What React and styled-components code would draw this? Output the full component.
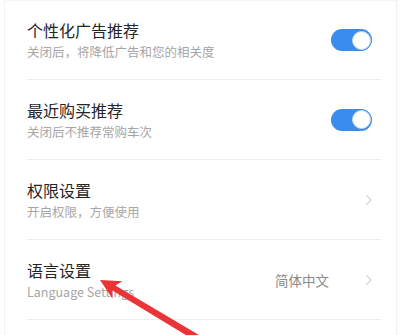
import styled, { createGlobalStyle } from "styled-components";

const GlobalStyle = createGlobalStyle`
  body {
    margin: 0;
    background: #ffffff;
    font-family: "Noto Sans CJK SC", "Noto Sans", sans-serif;
  }
`;

const items = [
  { title: "个性化广告推荐", sub: "关闭后，将降低广告和您的相关度", type: "toggle" },
  { title: "最近购买推荐", sub: "关闭后不推荐常购车次", type: "toggle" },
  { title: "权限设置", sub: "开启权限，方便使用", type: "link" },
  { title: "语言设置", sub: "Language Settings", type: "link", value: "简体中文" },
];

export default function App() {
  return (
    <Page>
      <GlobalStyle />
      <Card>
        {items.map((item) => (
          <Row key={item.title}>
            <TextBlock>
              <Title>{item.title}</Title>
              <Sub>{item.sub}</Sub>
            </TextBlock>
            {item.type === "toggle" ? (
              <Toggle>
                <Knob />
              </Toggle>
            ) : (
              <LinkSide>
                {item.value && <Value>{item.value}</Value>}
                <Chevron width="8" height="12" viewBox="0 0 8 12">
                  <path d="M1.5 1.5 L6 6 L1.5 10.5" fill="none" stroke="#d2d2d2" strokeWidth="1.2" />
                </Chevron>
              </LinkSide>
            )}
          </Row>
        ))}
      </Card>
      <Arrow width="400" height="335" viewBox="0 0 400 335">
        <polygon
          points="100,280 122.3,281.2 115.4,285.4 210.7,342 207.3,348 112.4,290.6 112.4,298.6"
          fill="#ea3437"
        />
      </Arrow>
    </Page>
  );
}

const Page = styled.div`
  position: relative;
  width: 400px;
  height: 335px;
  overflow: hidden;
  background: #ffffff;
`;

const Card = styled.div`
  margin: 0 3px 0 4px;
  border-left: 1px solid #f3f3f3;
  border-right: 1px solid #f0f0f0;
  border-top: 1px solid #f5f5f5;
  padding: 0 15px 0 22px;
  height: 100%;
`;

const Row = styled.div`
  display: flex;
  align-items: center;
  justify-content: space-between;
  height: 78px;
  border-bottom: 1px solid #ececec;
  & + & {
    height: 79px;
  }
`;

const TextBlock = styled.div`
  display: flex;
  flex-direction: column;
  gap: 3px;
`;

const Title = styled.div`
  font-size: 16px;
  line-height: 20px;
  color: #262626;
`;

const Sub = styled.div`
  font-size: 12.5px;
  line-height: 17px;
  color: #a6a6a6;
`;

const Toggle = styled.div`
  display: flex;
  align-items: center;
  justify-content: flex-end;
  width: 41px;
  height: 22px;
  margin-right: 9px;
  padding: 0 1.5px;
  box-sizing: border-box;
  border-radius: 11px;
  background: #3a8def;
`;

const Knob = styled.div`
  width: 19px;
  height: 19px;
  box-sizing: border-box;
  border-radius: 50%;
  background: #ffffff;
  border: 1px solid #c9d6e3;
`;

const LinkSide = styled.div`
  display: flex;
  align-items: center;
  gap: 36px;
  margin-right: 8px;
`;

const Value = styled.span`
  font-size: 13.5px;
  color: #8a8a8a;
`;

const Chevron = styled.svg`
  display: block;
`;

const Arrow = styled.svg`
  position: absolute;
  left: 0;
  top: 0;
  pointer-events: none;
`;
